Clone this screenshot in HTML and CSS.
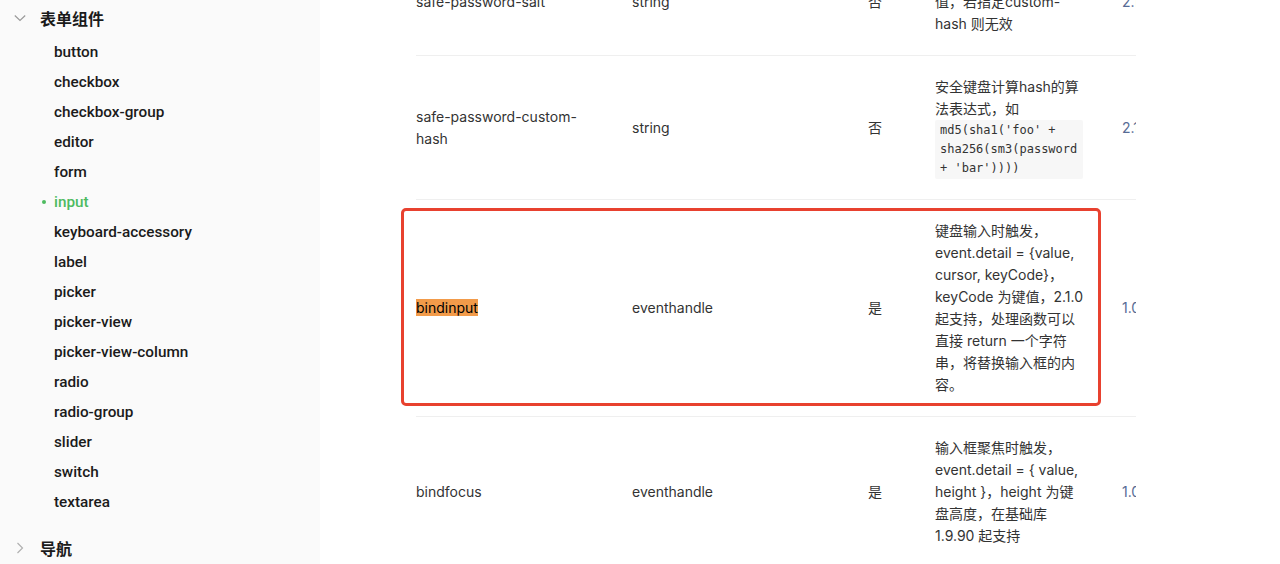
FILE: index.html
```html
<!DOCTYPE html>
<html lang="zh-CN">
<head>
<meta charset="utf-8">
<title>input</title>
<link rel="stylesheet" href="styles.css">
</head>
<body>
<div class="page">
  <aside class="sidebar">
    <div class="group-head">
      <svg class="chev" width="12" height="12" viewBox="0 0 12 12"><path d="M0.8 3.5 L6 8.5 L11.2 3.5" fill="none" stroke="#9a9a9a" stroke-width="1.2"/></svg>
      <span>表单组件</span>
    </div>
    <ul class="items">
      <li>button</li>
      <li>checkbox</li>
      <li>checkbox-group</li>
      <li>editor</li>
      <li>form</li>
      <li class="active">input</li>
      <li>keyboard-accessory</li>
      <li>label</li>
      <li>picker</li>
      <li>picker-view</li>
      <li>picker-view-column</li>
      <li>radio</li>
      <li>radio-group</li>
      <li>slider</li>
      <li>switch</li>
      <li>textarea</li>
    </ul>
    <div class="group-head">
      <svg class="chev" width="12" height="12" viewBox="0 0 12 12"><path d="M3.5 1 L8.5 6 L3.5 11" fill="none" stroke="#b0b0b0" stroke-width="1.2"/></svg>
      <span>导航</span>
    </div>
  </aside>
  <main class="content">
    <div class="table-clip">
      <table class="attr-table">
        <colgroup>
          <col class="c-name"><col class="c-type"><col class="c-req"><col class="c-desc"><col class="c-ver">
        </colgroup>
        <tbody>
          <tr>
            <td class="name">safe-password-salt</td>
            <td>string</td>
            <td>否</td>
            <td class="desc">安全键盘计算hash盐值，若指定custom-hash 则无效</td>
            <td class="ver">2.18.0</td>
          </tr>
          <tr>
            <td class="name">safe-password-custom-hash</td>
            <td>string</td>
            <td>否</td>
            <td class="desc">安全键盘计算hash的算法表达式，如 <code>md5(sha1('foo' + sha256(sm3(password + 'bar'))))</code></td>
            <td class="ver">2.18.0</td>
          </tr>
          <tr>
            <td class="name"><mark>bindinput</mark></td>
            <td>eventhandle</td>
            <td>是</td>
            <td class="desc">键盘输入时触发，event.detail = {value, cursor, keyCode}，keyCode 为键值，2.1.0 起支持，处理函数可以直接 return 一个字符串，将替换输入框的内容。</td>
            <td class="ver">1.0.0</td>
          </tr>
          <tr>
            <td class="name">bindfocus</td>
            <td>eventhandle</td>
            <td>是</td>
            <td class="desc">输入框聚焦时触发，event.detail = { value, height }，height 为键盘高度，在基础库 1.9.90 起支持</td>
            <td class="ver">1.0.0</td>
          </tr>
        </tbody>
      </table>
    </div>
    <div class="annot"></div>
  </main>
</div>
</body>
</html>
```

FILE: styles.css
```css
html, body {
  margin: 0;
  padding: 0;
  height: 564px;
  overflow: hidden;
  background: #ffffff;
}

.page {
  display: flex;
  height: 564px;
}

.sidebar {
  width: 320px;
  flex: 0 0 320px;
  background: #fafafa;
  font-family: Roboto, "Noto Sans CJK SC", sans-serif;
  color: #1b1b1b;
}

.group-head {
  box-sizing: border-box;
  height: 36px;
  display: flex;
  align-items: center;
  padding: 0 0 1px 14px;
  gap: 14px;
  font-family: "Noto Sans CJK SC", sans-serif;
  font-size: 16px;
  font-weight: 600;
  color: #1b1b1b;
}

.chev {
  display: block;
  flex: 0 0 12px;
}

.items {
  list-style: none;
  margin: 1px 0 0;
  padding: 0 0 13px;
}

.items li {
  position: relative;
  height: 30px;
  line-height: 30px;
  padding-left: 54px;
  font-size: 15.3px;
  font-weight: 500;
}

.items li.active {
  color: #4dbb5f;
}

.items li.active::before {
  content: "";
  position: absolute;
  left: 42px;
  top: 13px;
  width: 4px;
  height: 4px;
  border-radius: 50%;
  background: #4dbb5f;
}

.content {
  position: relative;
  flex: 1;
  padding-left: 96px;
  overflow: hidden;
}

.table-clip {
  width: 720px;
  overflow: hidden;
}

.attr-table {
  margin-top: -51px;
  width: 786px;
  table-layout: fixed;
  border-collapse: collapse;
  font-family: Inter, "Noto Sans CJK SC", sans-serif;
  font-size: 14px;
  line-height: 22px;
  color: #333333;
}

.c-name { width: 216px; }
.c-type { width: 236px; }
.c-req { width: 67px; }
.c-desc { width: 187px; }
.c-ver { width: 80px; }

.attr-table td {
  padding: 20px 0;
  vertical-align: middle;
  border-bottom: 1px solid #efefef;
  text-align: left;
}

.attr-table td.name {
  padding-right: 46px;
}

.attr-table td.desc {
  padding-right: 39px;
}

.attr-table td.ver {
  color: #576b95;
  white-space: nowrap;
}

.attr-table mark {
  background: #f29b4a;
  color: #000000;
}

.attr-table code {
  display: block;
  margin: 0;
  padding: 1px 5px;
  background: #f7f7f7;
  border-radius: 2px;
  font-family: "DejaVu Sans Mono", "Liberation Mono", monospace;
  font-size: 12px;
  line-height: 19px;
  color: #333333;
}

.annot {
  position: absolute;
  left: 81px;
  top: 208px;
  width: 694px;
  height: 192px;
  border: 3px solid #e8412f;
  border-radius: 5px;
}
```
